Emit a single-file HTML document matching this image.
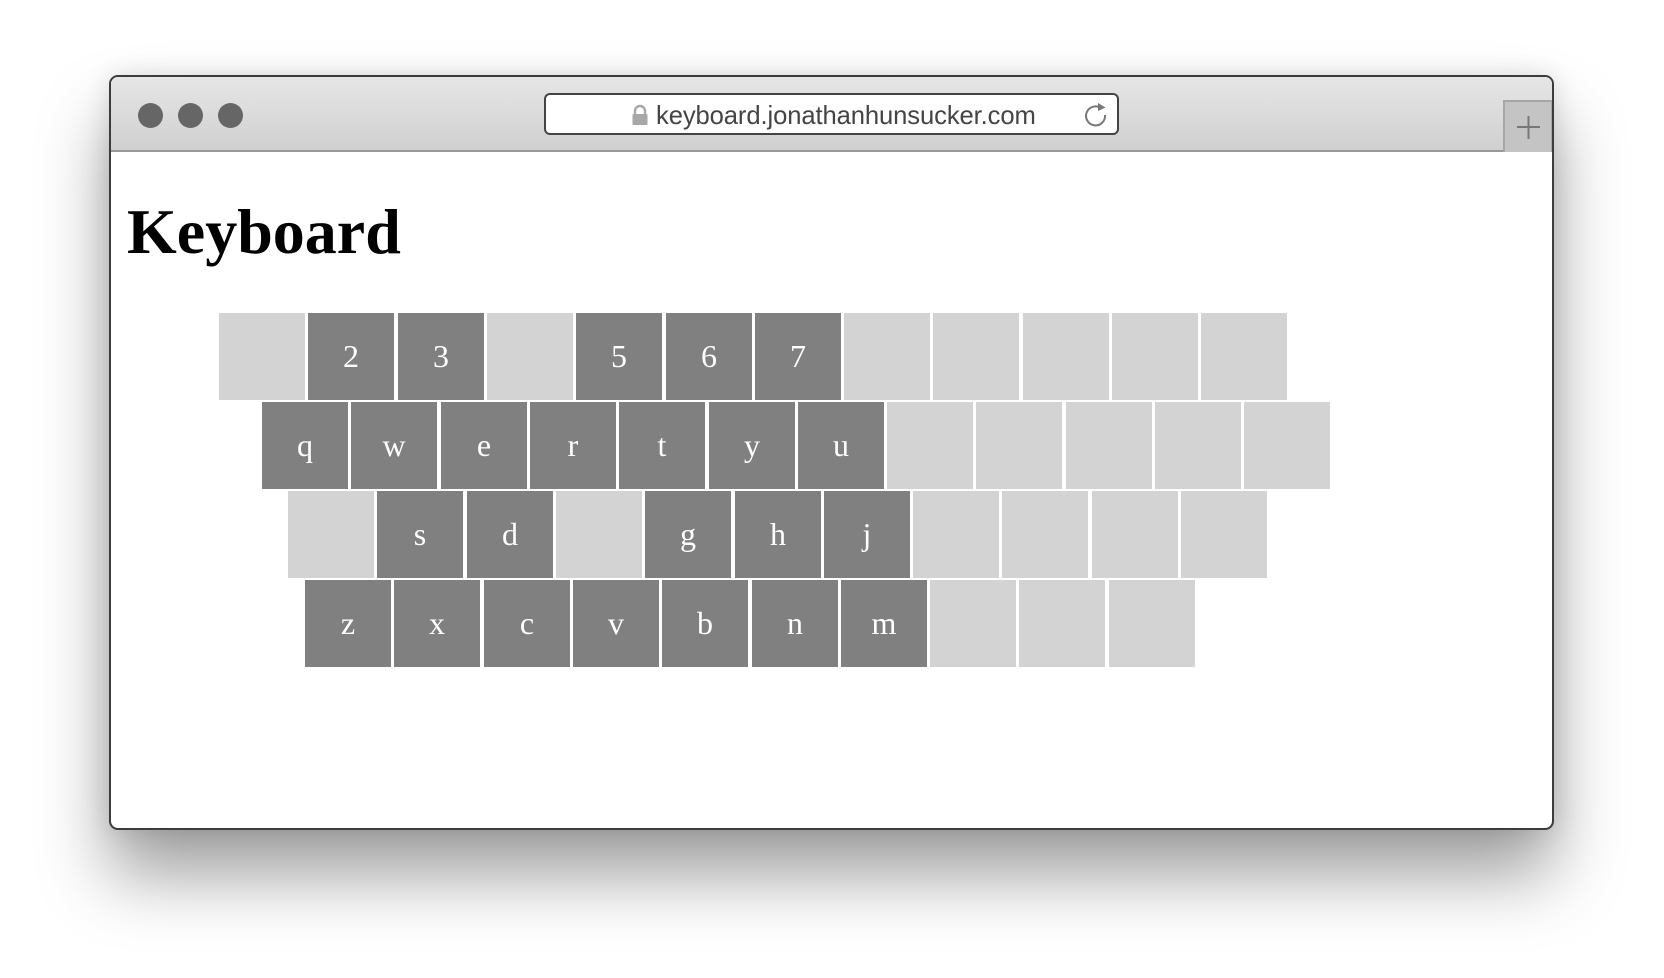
<!DOCTYPE html>
<html><head><meta charset="utf-8"><style>
html,body{margin:0;padding:0;background:#fff;width:1664px;height:978px;overflow:hidden}
.win{position:absolute;left:109px;top:75px;width:1441px;height:751px;border:2px solid #3c3c3c;border-radius:9px;background:#fff;box-shadow:0 45px 70px rgba(0,0,0,.38),0 0 25px rgba(0,0,0,.12);overflow:hidden}
.bar{position:absolute;left:0;top:0;right:0;height:73px;background:linear-gradient(#e6e6e6,#d0d0d0);border-bottom:2px solid #999}
.dot{position:absolute;top:26px;width:25px;height:25px;border-radius:50%;background:#666}
.url{position:absolute;left:433px;top:16px;width:571px;height:38px;border:2px solid #444;border-radius:6px;background:#fff}
.url span{position:absolute;left:110px;top:7px;font:25.6px "Liberation Sans",sans-serif;color:#444;letter-spacing:-.1px}
.plus{position:absolute;left:1392px;top:23px;width:46px;height:50px;background:#c4c4c4;border:2px solid #a6a6a6;border-bottom:none}
h1{position:absolute;left:16px;top:118px;margin:0;font:bold 64px "Liberation Serif",serif;color:#000}
.k{position:absolute;width:86px;height:87px;line-height:87px;text-align:center;font:32px/87px "Liberation Serif",serif;color:#fff;background:#d3d3d3}
.d{background:#808080}
</style></head><body>
<div class="win">
 <div class="bar">
  <div class="dot" style="left:27px"></div><div class="dot" style="left:67px"></div><div class="dot" style="left:107px"></div>
  <div class="url">
   <svg style="position:absolute;left:84px;top:9px" width="20" height="22" viewBox="0 0 20 22"><path d="M5 10V7a5 5 0 0 1 10 0v3" fill="none" stroke="#a8a8a8" stroke-width="2.4"/><rect x="2.5" y="10" width="15" height="11" rx="1" fill="#a8a8a8"/></svg>
   <span>keyboard.jonathanhunsucker.com</span>
   <svg style="position:absolute;left:536px;top:3px" width="30" height="30" viewBox="0 0 30 30"><path d="M19.5 10.5A9.5 9.5 0 1 0 23 17" fill="none" stroke="#777" stroke-width="2"/><path d="M16 5l7.5 4.5-7.5 3.5z" fill="#777"/></svg>
  </div>
  <div class="plus"><svg width="46" height="50" viewBox="0 0 46 50"><path d="M12 25h23M23.5 14v23" stroke="#777" stroke-width="2"/></svg></div>
 </div>
 <h1>Keyboard</h1>
</div>
<div id="kb"></div>
<script>
var rows=[[219,313,["",0,"2",1,"3",1,"",0,"5",1,"6",1,"7",1,"",0,"",0,"",0,"",0,"",0]],
[262,402,["q",1,"w",1,"e",1,"r",1,"t",1,"y",1,"u",1,"",0,"",0,"",0,"",0,"",0]],
[288,491,["",0,"s",1,"d",1,"",0,"g",1,"h",1,"j",1,"",0,"",0,"",0,"",0]],
[305,580,["z",1,"x",1,"c",1,"v",1,"b",1,"n",1,"m",1,"",0,"",0,"",0]]];
var h="";rows.forEach(function(r){for(var i=0;i<r[2].length;i+=2){h+='<div class="k'+(r[2][i+1]?' d':'')+'" style="left:'+Math.round(r[0]+89.3*(i/2))+'px;top:'+r[1]+'px">'+r[2][i]+'</div>';}});
document.getElementById("kb").innerHTML=h;
</script>
</body></html>
